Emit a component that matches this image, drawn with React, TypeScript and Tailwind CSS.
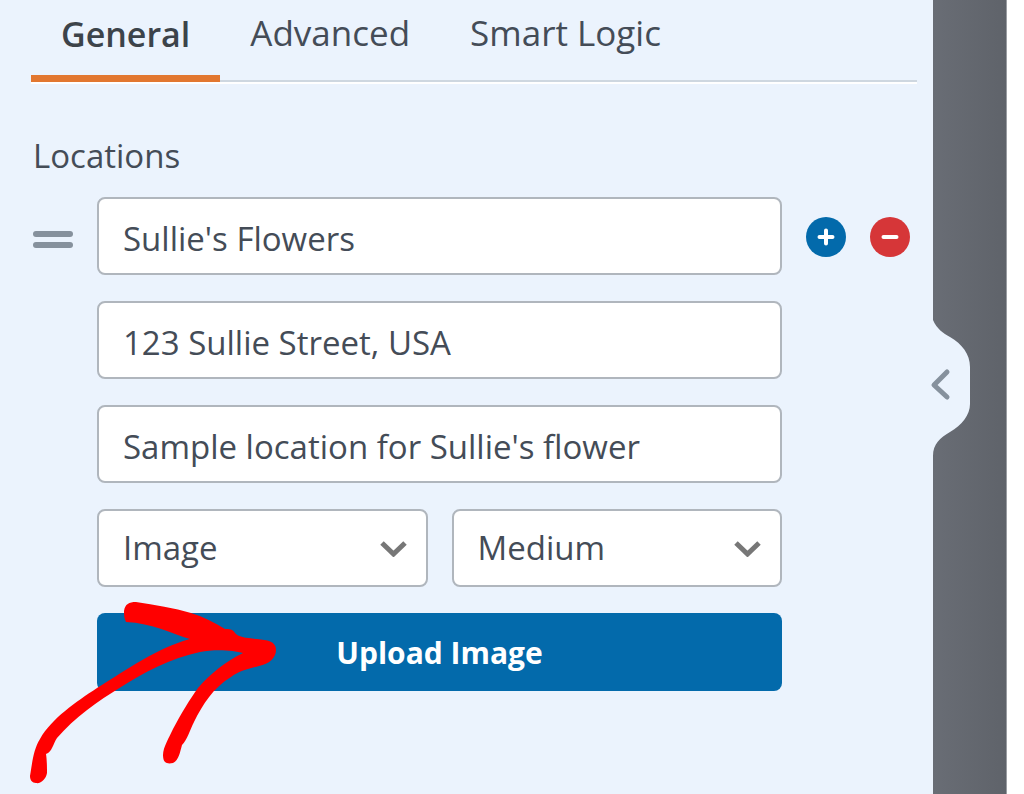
import React from "react";

const tabs = ["General", "Advanced", "Smart Logic"];

const fields = [
  { label: "Name", value: "Sullie's Flowers" },
  { label: "Address", value: "123 Sullie Street, USA" },
  { label: "Description", value: "Sample location for Sullie's flower" },
];

const selects = [
  { label: "Media type", options: ["Image", "Icon"] },
  { label: "Image size", options: ["Medium", "Small", "Large"] },
];

const boxClass =
  "h-[78px] w-full rounded-lg border-2 border-[#b0b6bd] bg-white px-6 text-[33px] text-[#444c57]";

const Tabs: React.FC = () => {
  return (
    <nav className="ml-[31px] mr-4 flex h-[84px] border-b-2 border-white">
      <div className="flex w-full border-b-2 border-[#ced7e0]">
        {tabs.map((tab, index) => (
          <button
            key={tab}
            type="button"
            className={
              index === 0
                ? "-mb-[2px] border-b-[7px] border-[#e27730] px-[30px] pb-2 text-[34px] leading-[66px] font-semibold text-[#3c434a]"
                : "px-[30px] pb-[14px] text-[35px] leading-[66px] text-[#444c57]"
            }
          >
            {tab}
          </button>
        ))}
      </div>
    </nav>
  );
};

const Location: React.FC = () => {
  return (
    <div className="flex items-start gap-6">
      <button
        type="button"
        aria-label="Move location"
        className="flex h-[84px] w-10 shrink-0 flex-col items-center justify-center gap-[5px]"
      >
        <span className="h-[6px] w-full rounded-full bg-[#86919d]" />
        <span className="h-[6px] w-full rounded-full bg-[#86919d]" />
      </button>

      <div className="flex min-w-0 flex-1 flex-col gap-[26px]">
        {fields.map((field) => (
          <input
            key={field.label}
            type="text"
            aria-label={field.label}
            defaultValue={field.value}
            className={`${boxClass} pt-1`}
          />
        ))}
        <div className="flex gap-6">
          {selects.map((select) => (
            <div key={select.label} className="relative flex-1">
              <select aria-label={select.label} className={`${boxClass} appearance-none`}>
                {select.options.map((option) => (
                  <option key={option}>{option}</option>
                ))}
              </select>
              <svg
                className="pointer-events-none absolute top-8 right-5 h-4 w-7"
                viewBox="0 0 28 16"
                fill="none"
                stroke="#777777"
                strokeWidth="5"
              >
                <path d="M2 2 L13.5 13 L25 2" />
              </svg>
            </div>
          ))}
        </div>
        <button
          type="button"
          className="h-[78px] w-full rounded-lg bg-[#036aab] text-[30px] font-bold text-white"
        >
          Upload Image
        </button>
      </div>

      <div className="flex h-20 shrink-0 items-center gap-6">
        <button type="button" aria-label="Add location">
          <svg className="size-10" viewBox="0 0 40 40">
            <circle cx="20" cy="20" r="20" fill="#036aab" />
            <path
              d="M13.5 20 H26.5 M20 13.5 V26.5"
              stroke="white"
              strokeWidth="4"
              strokeLinecap="round"
            />
          </svg>
        </button>
        <button type="button" aria-label="Remove location">
          <svg className="size-10" viewBox="0 0 40 40">
            <circle cx="20" cy="20" r="20" fill="#d63638" />
            <path d="M13.5 20 H26.5" stroke="white" strokeWidth="4" strokeLinecap="round" />
          </svg>
        </button>
      </div>
    </div>
  );
};

const Arrow: React.FC = () => {
  return (
    <svg
      className="pointer-events-none absolute top-[600px] left-[28px] h-[186px] w-[252px]"
      viewBox="28 600 252 186"
      fill="#ff0000"
    >
      <path d="M124 611 C125 604 129 602 136 602 C155 605 174 608 191 613 C204 617 215 623 225 629 C229 629 233 629 235 633 C238 637 246 638 257 639 C267 640 276 641 276 650 C276 658 269 664 259 666 C247 669 239 671 231 677 C213 688 203 704 194 722 C190 730 187 740 182 745 C180 752 179 760 173 763 C168 764 163 764 163 755 C163 747 169 738 173 729 C181 714 190 699 198 688 C210 674 226 661 243 653 C233 650 214 649 200 652 C171 658 143 673 121 687 C98 701 74 718 57 738 C53 744 52 752 46 754 C47 760 47 769 47 773 C46 779 41 784 36 783 C32 783 30 780 30 776 C32 765 33 750 40 739 C52 718 76 702 97 688 C128 669 157 648 190 639 C173 634 152 623 126 622 C124 618 124 615 124 611 Z" />
    </svg>
  );
};

const App: React.FC = () => {
  return (
    <div className="flex min-h-screen bg-white font-['Open_Sans',sans-serif]">
      <main className="relative min-w-0 flex-1 bg-[#ebf3fd]">
        <Tabs />
        <section className="pt-[48px] pr-[23px] pb-6 pl-[33px]">
          <h2 className="mb-[17px] text-[33px] leading-[48px] text-[#444c57]">Locations</h2>
          <Location />
        </section>
        <Arrow />
      </main>
      <aside className="relative w-[74px] shrink-0 border-r border-[#9a9da2] bg-linear-to-r from-[#696d75] to-[#5f636a]">
        <button
          type="button"
          aria-label="Collapse panel"
          className="absolute top-[320px] -left-1 h-[136px] w-[41px]"
        >
          <svg className="h-full w-full" viewBox="-4 0 41 136" fill="none">
            <path
              d="M-4 0 H0 C4 9 10 13 17 17 C29 24 37 34 37 47 V84 C37 95 29 105 17 112 C7 118 0 124 0 136 H-4 Z"
              fill="#ebf3fd"
            />
            <path
              d="M14 52 L1 65 L14 77"
              stroke="#86919d"
              strokeWidth="5"
              strokeLinecap="round"
              strokeLinejoin="round"
            />
          </svg>
        </button>
      </aside>
      <div className="w-[17px] shrink-0" />
    </div>
  );
};

export default App;
